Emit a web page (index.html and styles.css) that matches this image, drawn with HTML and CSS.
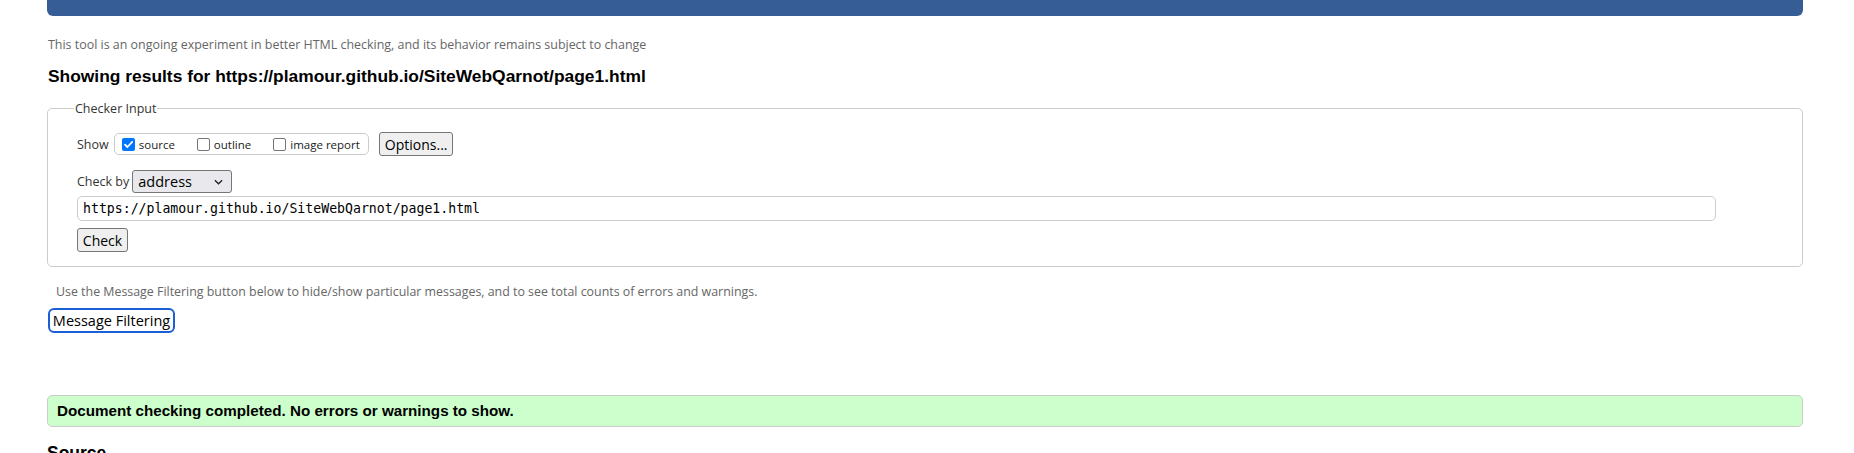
FILE: index.html
```html
<!DOCTYPE html>
<html lang="en">
<head>
<meta charset="utf-8">
<title>Nu Html Checker</title>
<link rel="stylesheet" href="styles.css">
</head>
<body>
<div class="page">
  <div class="topbar"></div>
  <p class="note">This tool is an ongoing experiment in better HTML checking, and its behavior remains subject to change</p>
  <h2 class="results">Showing results for https://plamour.github.io/SiteWebQarnot/page1.html</h2>
  <fieldset class="checker">
    <legend class="checker-legend">Checker Input</legend>
    <div class="show-row">
      <span class="label">Show</span>
      <span class="show-group">
        <span class="opt"><span class="cb cb-on"><svg viewBox="0 0 13 13" width="13" height="13"><path d="M3 6.6 L5.4 9 L10.2 3.8" fill="none" stroke="#fff" stroke-width="1.8" stroke-linecap="round" stroke-linejoin="round"/></svg></span><span class="opt-text">source</span></span>
        <span class="opt"><span class="cb"></span><span class="opt-text">outline</span></span>
        <span class="opt"><span class="cb"></span><span class="opt-text">image report</span></span>
      </span>
      <button class="btn btn-options" type="button">Options...</button>
    </div>
    <div class="by-row">
      <span class="label">Check by</span>
      <span class="select"><span class="select-text">address</span><svg class="chev" viewBox="0 0 10 6" width="9" height="6"><path d="M1 1 L5 5 L9 1" fill="none" stroke="#222" stroke-width="1.4"/></svg></span>
    </div>
    <div class="url">https://plamour.github.io/SiteWebQarnot/page1.html</div>
    <button class="btn btn-check" type="button">Check</button>
  </fieldset>
  <p class="filter-note">Use the Message Filtering button below to hide/show particular messages, and to see total counts of errors and warnings.</p>
  <button class="btn btn-filter" type="button">Message Filtering</button>
  <div class="success">Document checking completed. No errors or warnings to show.</div>
  <h2 class="source">Source</h2>
</div>
</body>
</html>
```
FILE: styles.css
```css
html, body {
  margin: 0;
  padding: 0;
  background: #fff;
}
body {
  font-family: "Open Sans", "Noto Sans", sans-serif;
  color: #222;
}
.page {
  padding: 0 51px 0 47px;
}
.topbar {
  height: 16px;
  background: #365d95;
  border-radius: 0 0 6px 6px;
}
.note {
  margin: 21px 0 0 1px;
  font-size: 12.45px;
  line-height: 16px;
  color: #666;
}
.results {
  margin: 14px 0 0 1px;
  font-family: "Liberation Sans", Arial, sans-serif;
  font-weight: bold;
  font-size: 17.4px;
  line-height: 18px;
  color: #000;
}
.checker {
  margin: 15px 0 0 0;
  padding: 15px 0 14px 29px;
  border: 1px solid #ccc;
  border-radius: 5px;
  min-width: 0;
}
.checker-legend {
  margin-left: -3px;
  padding: 0 1px;
  font-size: 12.5px;
  line-height: 17px;
  color: #333;
}
.show-row {
  display: flex;
  align-items: center;
  height: 24px;
}
.label {
  font-size: 12.5px;
  color: #333;
}
.show-group {
  display: flex;
  align-items: center;
  height: 20px;
  margin-left: 5px;
  padding: 0 8px 0 7px;
  border: 1px solid #ccc;
  border-radius: 5px;
  gap: 22px;
}
.opt {
  display: flex;
  align-items: center;
  gap: 4px;
}
.cb {
  display: inline-flex;
  box-sizing: border-box;
  width: 13px;
  height: 13px;
  border: 1px solid #767676;
  border-radius: 2px;
  background: #fff;
}
.cb-on {
  border: none;
  background: #0075ff;
}
.opt-text {
  font-size: 11.5px;
  color: #222;
}
.btn {
  font-family: "Open Sans", "Noto Sans", sans-serif;
  background: #efefef;
  border: 1px solid #767676;
  border-radius: 3px;
  color: #000;
  padding: 0 5px;
  margin: 0;
  box-sizing: border-box;
}
.btn-options {
  margin-left: 10px;
  width: 74px;
  height: 24px;
  font-size: 14px;
}
.by-row {
  display: flex;
  align-items: center;
  margin-top: 14px;
  height: 23px;
}
.select {
  display: flex;
  align-items: center;
  justify-content: space-between;
  box-sizing: border-box;
  width: 100px;
  height: 23px;
  margin-left: 3px;
  padding: 0 8px 0 5px;
  background: #e9e9ed;
  border: 1px solid #767676;
  border-radius: 3px;
}
.select-text {
  font-size: 14.5px;
  color: #000;
}
.url {
  box-sizing: border-box;
  margin: 3px 0 0 0;
  width: 1639px;
  height: 25px;
  padding: 0 5px;
  border: 1px solid #ccc;
  border-radius: 5px;
  font-family: "DejaVu Sans Mono", "Liberation Mono", monospace;
  font-size: 13.2px;
  line-height: 23px;
  color: #000;
}
.btn-check {
  display: block;
  margin-top: 7px;
  width: 51px;
  height: 24px;
  font-size: 14px;
  padding: 0;
}
.filter-note {
  margin: 17px 0 0 9px;
  font-size: 12.4px;
  line-height: 16px;
  color: #666;
}
.btn-filter {
  display: block;
  margin: 8px 0 0 1px;
  width: 127px;
  height: 25px;
  font-size: 14.5px;
  padding: 0;
  background: #fff;
  border: 2px solid #1a5fd6;
  border-radius: 6px;
}
.success {
  margin-top: 62px;
  height: 32px;
  box-sizing: border-box;
  padding: 0 9px;
  border: 1px solid #ccc;
  border-radius: 5px;
  background: #ccffcc;
  font-family: "Liberation Sans", Arial, sans-serif;
  font-weight: bold;
  font-size: 15.2px;
  line-height: 30px;
  color: #000;
}
.source {
  margin: 16px 0 0 0;
  font-family: "Liberation Sans", Arial, sans-serif;
  font-weight: bold;
  font-size: 17.5px;
  line-height: 20px;
  color: #000;
}
```
